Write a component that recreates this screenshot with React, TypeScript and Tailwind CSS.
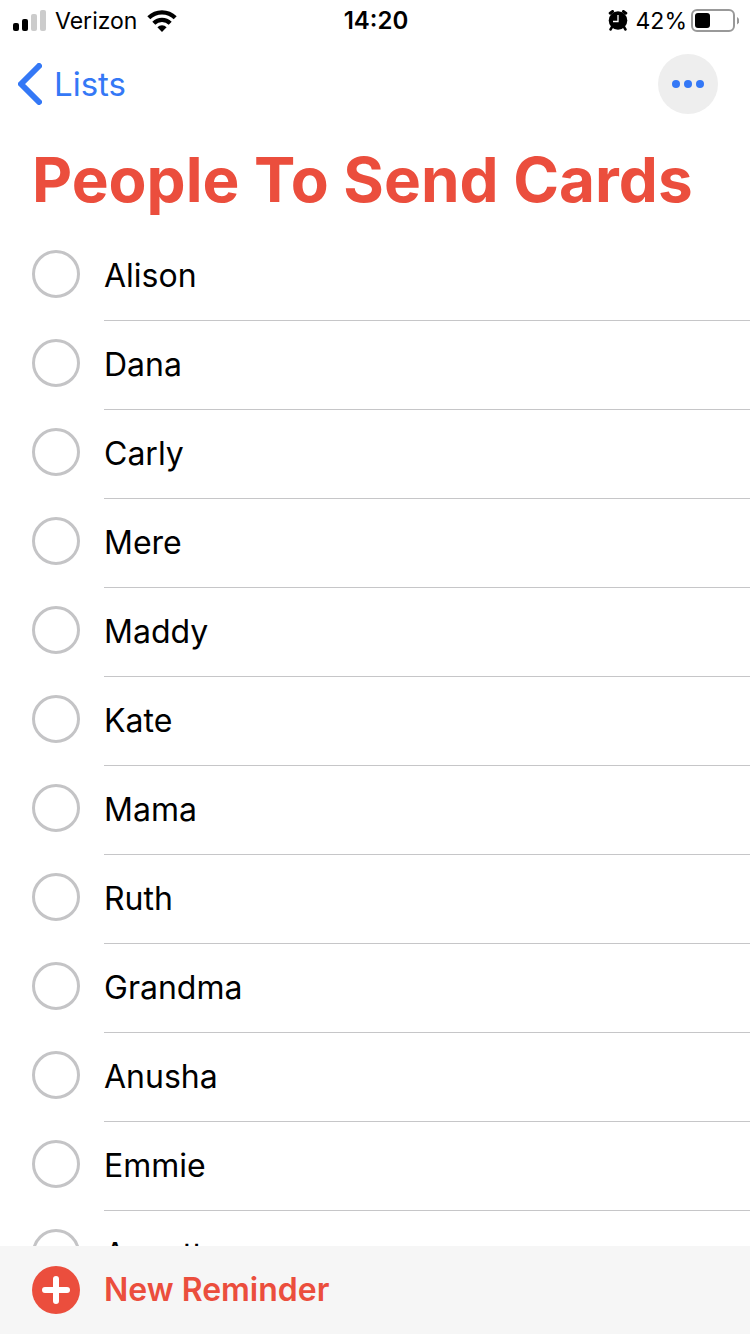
import React, { useState } from "react";

const people = [
  "Alison",
  "Dana",
  "Carly",
  "Mere",
  "Maddy",
  "Kate",
  "Mama",
  "Ruth",
  "Grandma",
  "Anusha",
  "Emmie",
  "Annette",
];

const SignalIcon = () => (
  <svg width="33" height="22" viewBox="0 0 33 22" aria-hidden="true">
    <rect x="0" y="13" width="6" height="8" rx="2" fill="#000" />
    <rect x="9" y="9" width="6" height="12" rx="2" fill="#000" />
    <rect x="18" y="4" width="6" height="17" rx="2" fill="#ccc" />
    <rect x="27" y="0" width="6" height="21" rx="2" fill="#ccc" />
  </svg>
);

const WifiIcon = () => (
  <svg width="30" height="22" viewBox="0 0 30 22" aria-hidden="true">
    <g fill="none" stroke="#000" strokeWidth="4.2">
      <path d="M1.800 7.800a18.700 18.700 0 0 1 26.400 0" />
      <path d="M6.800 13.200a11.600 11.600 0 0 1 16.400 0" />
    </g>
    <path d="M15 22l-4.600-4.800a6.600 6.600 0 0 1 9.200 0z" />
  </svg>
);

const AlarmIcon = () => (
  <svg width="20" height="21" viewBox="0 0 20 21" aria-hidden="true">
    <circle cx="10" cy="10.5" r="9.300" />
    <path
      d="M2.200 3.200l2.400-1.700M17.800 3.200l-2.400-1.700"
      stroke="#000"
      strokeWidth="3"
      strokeLinecap="round"
    />
    <path
      d="M4 17l-1.500 2.500M16 17l1.500 2.500"
      stroke="#000"
      strokeWidth="2.5"
      strokeLinecap="round"
    />
    <path d="M10 5V11.500H5" fill="none" stroke="#fff" strokeWidth="1.3" />
  </svg>
);

const BatteryIcon = () => (
  <svg width="48" height="24" viewBox="0 0 48 24" aria-hidden="true">
    <rect
      x="1"
      y="1"
      width="42"
      height="21"
      rx="5"
      fill="none"
      stroke="#999"
      strokeWidth="2"
    />
    <rect x="4" y="4" width="15" height="15" rx="3" />
    <path d="M46 8c3 1.500 3 6 0 7.500z" fill="#999" />
  </svg>
);

const ReminderRow = ({ name }: { name: string }) => {
  const [done, setDone] = useState(false);
  const id = `reminder-${name.toLowerCase()}`;

  return (
    <li className="flex gap-6 pl-8">
      <input
        id={id}
        type="checkbox"
        checked={done}
        onChange={() => setDone(!done)}
        className="mt-[18px] size-12 shrink-0 appearance-none rounded-full border-3 border-[#c4c4c6] checked:bg-[#eb4e3d]"
      />
      <label
        htmlFor={id}
        className="flex-1 border-b border-[#c6c6c8] pt-6 pb-6 text-[32px] leading-10 text-black"
      >
        {name}
      </label>
    </li>
  );
};

const App = () => {
  return (
    <div className="flex h-screen flex-col overflow-hidden bg-white font-['Inter',sans-serif]">
      {/* Status bar */}
      <div className="grid h-10 shrink-0 grid-cols-3 items-center pr-[11px] pl-[13px] text-[23px] leading-10 text-black">
        <div className="flex items-center gap-[9px]">
          <SignalIcon />
          <span className="pt-px pr-px">Verizon</span>
          <WifiIcon />
        </div>
        <div className="pt-px text-center text-2xl leading-10 font-semibold">
          14:20
        </div>
        <div className="flex items-center justify-end gap-1">
          <AlarmIcon />
          <span className="pt-px pl-1">42%</span>
          <BatteryIcon />
        </div>
      </div>

      {/* Navigation */}
      <nav className="flex h-[88px] shrink-0 items-center justify-between pr-8 pl-[18px]">
        <a href="#" className="flex items-center gap-3 text-[33px] text-[#3478f6]">
          <svg width="24" height="42" viewBox="0 0 24 42" aria-hidden="true">
            <path
              d="M21 3L3 21l18 18"
              fill="none"
              stroke="currentColor"
              strokeWidth="6"
              strokeLinecap="round"
              strokeLinejoin="round"
            />
          </svg>
          <span className="pt-px">Lists</span>
        </a>
        <button
          type="button"
          aria-label="More"
          className="flex size-[60px] items-center justify-center gap-1 rounded-full bg-[#eee]"
        >
          <span className="size-2 rounded-full bg-[#3478f6]" />
          <span className="size-2 rounded-full bg-[#3478f6]" />
          <span className="size-2 rounded-full bg-[#3478f6]" />
        </button>
      </nav>

      <h1 className="shrink-0 pt-3 pb-3 pl-8 text-[62px] leading-[80px] font-bold whitespace-nowrap text-[#eb4e3d]">
        People To Send Cards
      </h1>

      <ul className="min-h-0 flex-1 overflow-hidden">
        {people.map((name) => (
          <ReminderRow key={name} name={name} />
        ))}
      </ul>

      {/* Toolbar */}
      <div className="flex h-[88px] shrink-0 items-center bg-[#f6f6f6] px-8">
        <button
          type="button"
          className="flex items-center gap-6 text-[32px] font-semibold text-[#eb4e3d]"
        >
          <svg width="48" height="48" viewBox="0 0 48 48" aria-hidden="true">
            <circle cx="24" cy="24" r="24" fill="currentColor" />
            <path
              d="M24 13v22M13 24h22"
              stroke="#fff"
              strokeWidth="6"
              strokeLinecap="round"
            />
          </svg>
          New Reminder
        </button>
      </div>
    </div>
  );
};

export default App;
